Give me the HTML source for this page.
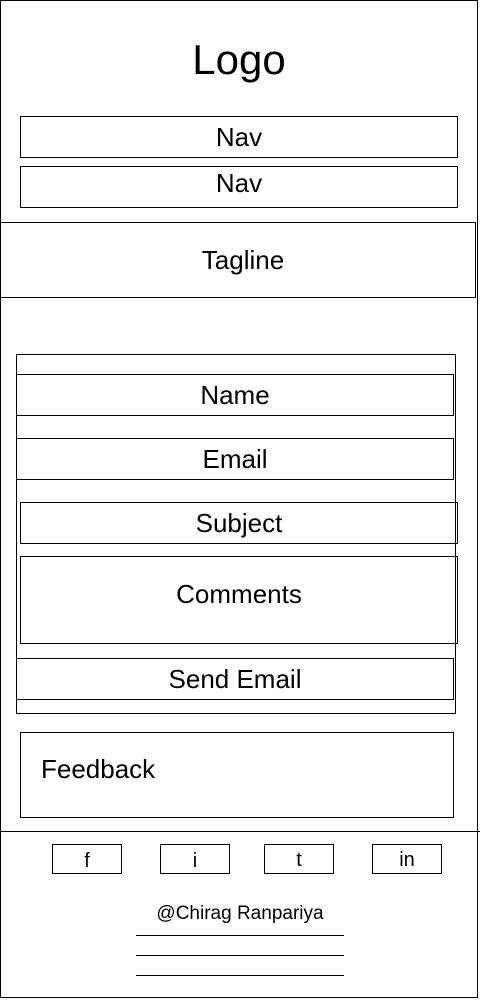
<!DOCTYPE html>
<html><head><meta charset="utf-8"><style>
body{margin:0;width:480px;height:1000px;background:#fff;position:relative;overflow:hidden;font-family:"Liberation Sans",sans-serif;color:#000}
.b{position:absolute;border:1px solid #000;box-sizing:border-box;display:flex;align-items:center;justify-content:center;font-size:26px}
.t{position:absolute;text-align:center;white-space:nowrap}
.l{position:absolute;height:1px;background:#000}
</style></head><body>
<div class="b" style="left:0;top:0;width:478px;height:998px"></div>
<div class="t" style="left:0;width:478px;top:36px;font-size:42px">Logo</div>
<div class="b" style="left:20px;top:116px;width:438px;height:42px">Nav</div>
<div class="b" style="left:20px;top:166px;width:438px;height:42px;align-items:flex-start;padding-top:1px">Nav</div>
<div class="b" style="left:0;top:222px;width:476px;height:76px;padding-left:10px">Tagline</div>
<div class="b" style="left:16px;top:354px;width:440px;height:360px"></div>
<div class="b" style="left:16px;top:374px;width:438px;height:42px">Name</div>
<div class="b" style="left:16px;top:438px;width:438px;height:42px">Email</div>
<div class="b" style="left:20px;top:502px;width:438px;height:42px">Subject</div>
<div class="b" style="left:20px;top:556px;width:438px;height:88px;align-items:flex-start;padding-top:22px">Comments</div>
<div class="b" style="left:16px;top:658px;width:438px;height:42px">Send Email</div>
<div class="b" style="left:20px;top:732px;width:434px;height:86px;justify-content:flex-start;align-items:flex-start;padding:21px 0 0 20px">Feedback</div>
<div class="l" style="left:0;top:831px;width:480px"></div>
<div class="b" style="left:52px;top:844px;width:70px;height:30px;font-size:20px;padding-top:4px">f</div>
<div class="b" style="left:160px;top:844px;width:70px;height:30px;font-size:20px;padding-top:4px">i</div>
<div class="b" style="left:264px;top:844px;width:70px;height:30px;font-size:20px;padding-top:2px">t</div>
<div class="b" style="left:372px;top:844px;width:70px;height:30px;font-size:20px;padding-top:2px">in</div>
<div class="t" style="left:136px;width:208px;top:903px;font-size:19px">@Chirag Ranpariya</div>
<div class="l" style="left:136px;top:935px;width:208px"></div>
<div class="l" style="left:136px;top:955px;width:208px"></div>
<div class="l" style="left:136px;top:975px;width:208px"></div>
</body></html>
